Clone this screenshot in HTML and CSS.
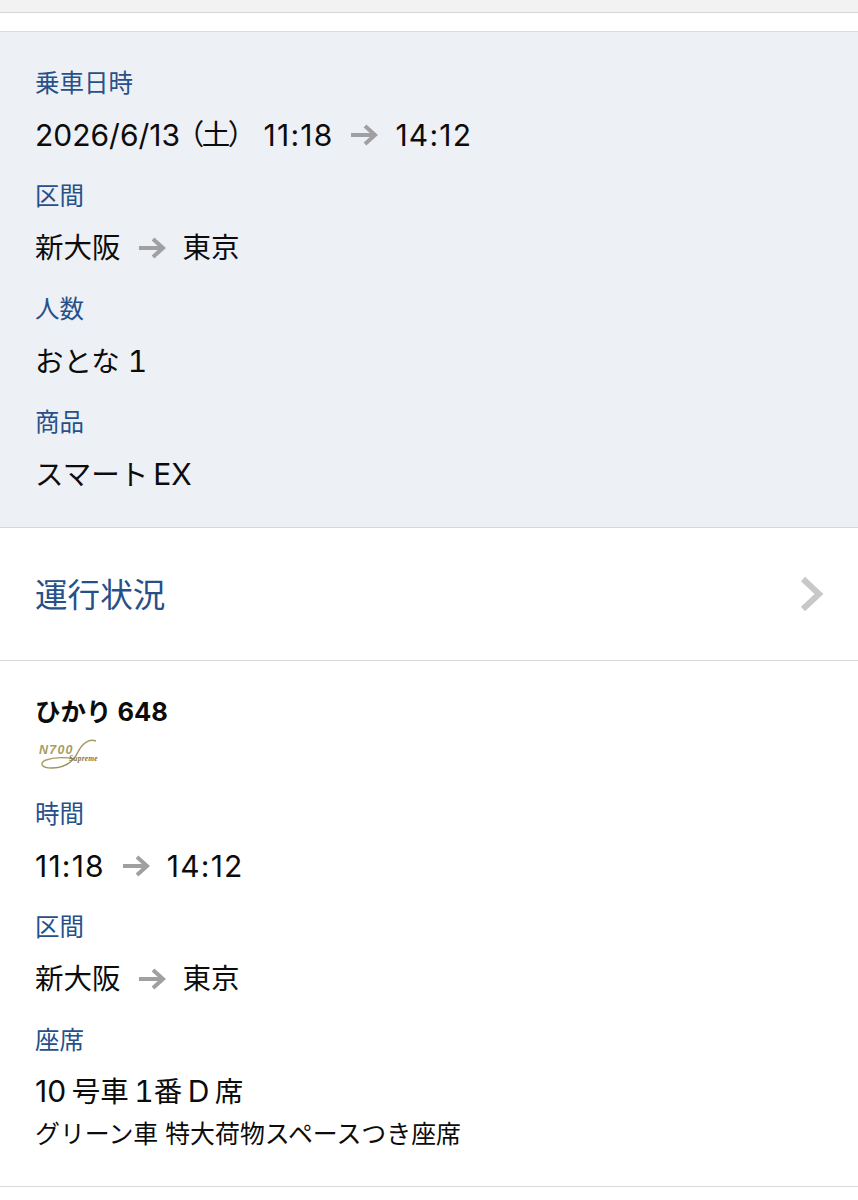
FILE: index.html
```html
<!DOCTYPE html>
<html lang="ja">
<head>
<meta charset="utf-8">
<title>予約詳細</title>
<link rel="stylesheet" href="styles.css">
</head>
<body>
<div class="topbar"></div>
<div class="gap"></div>
<section class="summary">
  <dl class="fields">
    <dt>乗車日時</dt>
    <dd class="flow"><span class="num">2026/6/13</span><span class="week">（土）</span><span class="num time">11:18</span><svg class="arrow" viewBox="0 0 28 22"><path d="M1 11H25M15 2l10 9-10 9"/></svg><span class="num time">14:12</span></dd>
    <dt>区間</dt>
    <dd class="flow"><span>新大阪</span><svg class="arrow" viewBox="0 0 28 22"><path d="M1 11H25M15 2l10 9-10 9"/></svg><span>東京</span></dd>
    <dt>人数</dt>
    <dd>おとな <span class="num tn">1</span></dd>
    <dt>商品</dt>
    <dd class="tight">スマート <span class="num">EX</span></dd>
  </dl>
</section>
<a class="status">
  <span>運行状況</span>
  <svg class="chev" viewBox="0 0 24 36"><path d="M3 3l16 15L3 33"/></svg>
</a>
<section class="train">
  <h2>ひかり 648</h2>
  <svg class="logo" viewBox="0 0 66 32">
    <defs>
      <linearGradient id="gold" x1="0" y1="0" x2="1" y2="1">
        <stop offset="0" stop-color="#c9bd8a"/>
        <stop offset="1" stop-color="#7f7338"/>
      </linearGradient>
    </defs>
    <text x="3" y="15" class="logo-n">N700</text>
    <path class="logo-s" d="M60 2C53-1 46 5 42 13 37 23 29 29 16 29 5 29 3 24 10 21c8-3 20-3 28-1"/>
    <text x="33" y="22" class="logo-t">Supreme</text>
  </svg>
  <dl class="fields">
    <dt>時間</dt>
    <dd class="flow"><span class="num time">11:18</span><svg class="arrow" viewBox="0 0 28 22"><path d="M1 11H25M15 2l10 9-10 9"/></svg><span class="num time">14:12</span></dd>
    <dt>区間</dt>
    <dd class="flow"><span>新大阪</span><svg class="arrow" viewBox="0 0 28 22"><path d="M1 11H25M15 2l10 9-10 9"/></svg><span>東京</span></dd>
    <dt>座席</dt>
    <dd class="seat"><span class="num">10</span> 号車 <span class="num tn">1</span>番 <span class="num">D</span> 席</dd>
    <dd class="sub">グリーン車 特大荷物スペースつき座席</dd>
  </dl>
</section>
</body>
</html>
```
FILE: styles.css
```css
* { box-sizing: border-box; }
html, body { margin: 0; padding: 0; }
body {
  width: 858px;
  height: 1200px;
  overflow: hidden;
  background: #fff;
  color: #0c0c0c;
  font-family: Inter, "Noto Sans CJK JP", sans-serif;
}
.topbar { height: 13px; background: #f2f2f2; border-bottom: 1px solid #d6d6d6; }
.gap { height: 18px; }
.summary {
  height: 497px;
  padding: 34px 35px 0;
  background: #edf0f5;
  border-top: 1px solid #d9dce0;
  border-bottom: 1px solid #d5d7db;
}
.fields { margin: 0; }
.fields dt {
  height: 34px;
  line-height: 34px;
  font-size: 24.5px;
  color: #27508a;
}
.fields dd {
  height: 79px;
  margin: 0;
  padding-top: 17px;
  line-height: 36px;
  font-size: 28.5px;
}
.num { font-size: 30px; }
.tn { font-variant-numeric: tabular-nums; }
.time { letter-spacing: 1.2px; }
.flow { display: flex; align-items: flex-start; }
.week { margin: 0 22px 0 9px; letter-spacing: -1.5px; font-feature-settings: "palt"; }
.tight { word-spacing: -3px; }
.arrow {
  width: 28px;
  height: 22px;
  margin: 7px 17px 0;
  fill: none;
  stroke: #a0a0a3;
  stroke-width: 4;
}
.status {
  display: flex;
  align-items: center;
  justify-content: space-between;
  height: 133px;
  padding: 0 34px 0 35px;
  font-size: 32.6px;
  color: #27508a;
  border-bottom: 1px solid #d9d9d9;
}
.status span { margin-bottom: 4px; }
.chev { width: 24px; height: 36px; fill: none; stroke: #c8c8c8; stroke-width: 6; }
.train {
  height: 526px;
  padding: 32px 35px 0;
  border-bottom: 1px solid #d9d9d9;
}
.train h2 { margin: 0; height: 38px; line-height: 38px; font-size: 25.5px; font-weight: 700; }
.logo { display: block; width: 66px; height: 32px; margin: 8px 0 26px 1px; }
.logo-n { font: italic 700 12.5px "Liberation Sans", sans-serif; fill: #a99c62; letter-spacing: 1.2px; }
.logo-t { font: italic 700 7.5px "Liberation Serif", serif; fill: #83774a; letter-spacing: 0.2px; }
.logo-s { fill: none; stroke: url(#gold); stroke-width: 1.4; }
.fields .seat { height: 62px; padding-top: 16px; word-spacing: -2.5px; }
.fields .sub { height: 40px; padding: 0; line-height: 30px; font-size: 24.9px; }
```
